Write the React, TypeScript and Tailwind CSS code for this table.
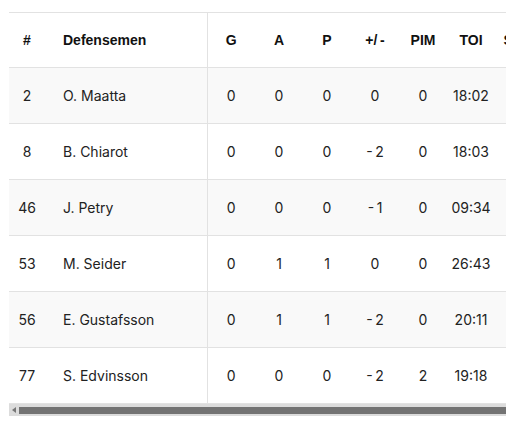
import React from "react";

type Row = {
  num: number;
  name: string;
  g: number;
  a: number;
  p: number;
  pm: string;
  pim: number;
  toi: string;
  sog: number;
};

const rows: Row[] = [
  { num: 2, name: "O. Maatta", g: 0, a: 0, p: 0, pm: "0", pim: 0, toi: "18:02", sog: 0 },
  { num: 8, name: "B. Chiarot", g: 0, a: 0, p: 0, pm: "-\u20092", pim: 0, toi: "18:03", sog: 1 },
  { num: 46, name: "J. Petry", g: 0, a: 0, p: 0, pm: "-\u20091", pim: 0, toi: "09:34", sog: 0 },
  { num: 53, name: "M. Seider", g: 0, a: 1, p: 1, pm: "0", pim: 0, toi: "26:43", sog: 2 },
  { num: 56, name: "E. Gustafsson", g: 0, a: 1, p: 1, pm: "-\u20092", pim: 0, toi: "20:11", sog: 1 },
  { num: 77, name: "S. Edvinsson", g: 0, a: 0, p: 0, pm: "-\u20092", pim: 2, toi: "19:18", sog: 0 },
];

const statCols = ["G", "A", "P", "+/\u2009-", "PIM", "TOI", "SOG"];
const headFont = { fontFamily: "'Liberation Sans', Arial, sans-serif" };

export default function App() {
  return (
    <div className="min-h-screen bg-white pl-[9px] pt-[12px]">
      <div className="overflow-hidden">
        <table
          className="table-fixed border-collapse w-[534px] text-[14px]"
          style={{ fontFamily: "Inter, 'Liberation Sans', sans-serif" }}
        >
          <colgroup>
            <col className="w-[36px]" />
            <col className="w-[162px]" />
            {statCols.map((c) => (
              <col key={c} className="w-[48px]" />
            ))}
          </colgroup>
          <thead>
            <tr className="h-[55px] border-t border-b border-[#e2e2e2] bg-white">
              <th className="text-center font-bold text-[#111]" style={headFont}>
                #
              </th>
              <th
                className="text-left pl-[18px] font-bold text-[#111] border-r border-[#e2e2e2]"
                style={headFont}
              >
                Defensemen
              </th>
              {statCols.map((c) => (
                <th key={c} className="text-center font-bold text-[#111]" style={headFont}>
                  {c}
                </th>
              ))}
            </tr>
          </thead>
          <tbody>
            {rows.map((r, i) => (
              <tr
                key={r.num}
                className={
                  "h-[56px] border-b border-[#e2e2e2] text-[#222] " +
                  (i % 2 === 0 ? "bg-[#f9f9f9]" : "bg-white")
                }
              >
                <td className="text-center">{r.num}</td>
                <td className="text-left pl-[18px] border-r border-[#e2e2e2]">{r.name}</td>
                <td className="text-center">{r.g}</td>
                <td className="text-center">{r.a}</td>
                <td className="text-center">{r.p}</td>
                <td className="text-center">{r.pm}</td>
                <td className="text-center">{r.pim}</td>
                <td className="text-center">{r.toi}</td>
                <td className="text-center">{r.sog}</td>
              </tr>
            ))}
          </tbody>
        </table>
      </div>
      {/* horizontal scrollbar */}
      <div className="h-[12px] bg-[#dcdcdc] flex items-center">
        <span className="w-[10px] flex justify-center">
          <svg width="4" height="6" viewBox="0 0 4 6">
            <path d="M4 0 L0 3 L4 6 Z" fill="#777" />
          </svg>
        </span>
        <div className="flex-1 h-[7px] bg-[#737373]" />
      </div>
    </div>
  );
}
